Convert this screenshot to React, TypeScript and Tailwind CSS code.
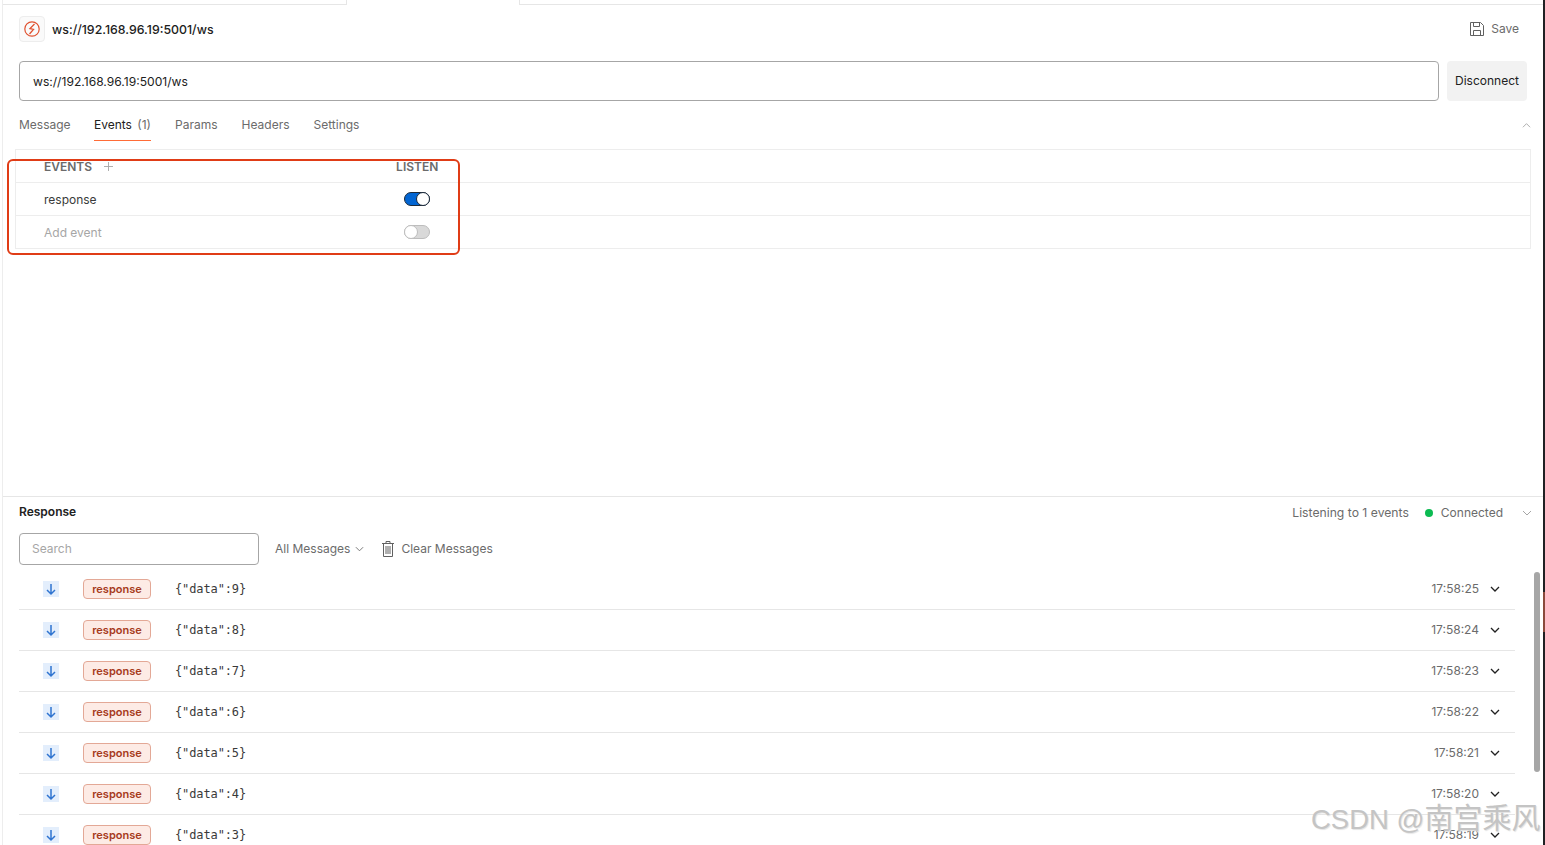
const font = { fontFamily: "Inter, 'Liberation Sans', sans-serif" }

const messages = [
  { data: 9, time: "17:58:25" },
  { data: 8, time: "17:58:24" },
  { data: 7, time: "17:58:23" },
  { data: 6, time: "17:58:22" },
  { data: 5, time: "17:58:21" },
  { data: 4, time: "17:58:20" },
  { data: 3, time: "17:58:19" },
]

function Chevron({ className, up, width = 1 }: { className: string; up?: boolean; width?: number }) {
  return (
    <svg viewBox="0 0 10 6" className={className} fill="none" stroke="currentColor" strokeWidth={width}>
      <path d={up ? "M1 5.5L5 1.5L9 5.5" : "M1 1L5 5L9 1"} />
    </svg>
  )
}

function Toggle({ on }: { on?: boolean }) {
  return (
    <div
      className={
        on
          ? "flex h-[14px] w-[26px] items-center justify-end rounded-full bg-[#0265d2] border border-[#1c2a3a]"
          : "flex h-[14px] w-[26px] items-center justify-start rounded-full bg-[#d9d9d9] border border-[#bdbdbd]"
      }
    >
      <div
        className={
          on
            ? "-mr-px h-[14px] w-[14px] shrink-0 rounded-full bg-white border border-[#1c2a3a]"
            : "-ml-px h-[14px] w-[14px] shrink-0 rounded-full bg-white border border-[#bdbdbd]"
        }
      />
    </div>
  )
}

function MessageRow({ data, time }: { data: number; time: string }) {
  return (
    <div className="flex h-[41px] shrink-0 items-center border-b border-[#e6e6e6] pl-[24px] pr-[15px]">
      <div className="flex h-4 w-4 items-center justify-center bg-[#e3eefc] text-[#2f74d0]">
        <svg viewBox="0 0 16 16" className="h-4 w-4" fill="none" stroke="currentColor" strokeWidth="1.5">
          <path d="M8 3V13M4 9L8 13L12 9" />
        </svg>
      </div>
      <div className="ml-[24px] flex h-5 w-[68px] items-center justify-center rounded-[4px] border border-[#e3a896] bg-[#fdebe5] text-[11px] font-semibold text-[#a63a1c]">
        response
      </div>
      <div className="ml-[24px] text-[12px] text-[#3a3a3a]" style={{ fontFamily: "'DejaVu Sans Mono', monospace", letterSpacing: "-0.12px" }}>
        {`{"data":${data}}`}
      </div>
      <div className="ml-auto text-[12px] text-[#6b6b6b]">{time}</div>
      <Chevron width={1.3} className="ml-[11px] h-[6px] w-[10px] text-[#212121]" />
    </div>
  )
}

export default function App() {
  return (
    <div className="relative flex h-[845px] w-full overflow-hidden bg-white" style={font}>
      <div className="w-[3px] shrink-0 border-r border-[#ededed]" />
      <div className="flex min-w-0 flex-1 flex-col">
        {/* top tab strip */}
        <div className="flex h-[5px] shrink-0">
          <div className="w-[344px] border-b border-r border-[#e6e6e6]" />
          <div className="w-[172px]" />
          <div className="flex-1 border-b border-l border-[#e6e6e6]" />
        </div>

        {/* request pane */}
        <div className="flex h-[492px] shrink-0 flex-col border-b border-[#e6e6e6]">
          <div className="flex h-[26px] mt-[11px] shrink-0 items-center pl-4 pr-6">
            <div className="flex h-[26px] w-[26px] items-center justify-center rounded-[4px] border border-[#ededed] bg-[#fafafa] text-[#e0512f]">
              <svg viewBox="0 0 16 16" className="h-4 w-4" fill="none" stroke="currentColor" strokeWidth="1.2">
                <circle cx="8" cy="8" r="7.2" />
                <path d="M10.5 3L6 7.6L9.5 8.4L5.5 13" strokeWidth="1.3" />
              </svg>
            </div>
            <div className="ml-[7px] mt-[2px] text-[12.35px] font-medium text-[#212121]">ws://192.168.96.19:5001/ws</div>
            <div className="ml-auto flex items-center text-[12px] text-[#6b6b6b]">
              <svg viewBox="0 0 16 16" className="h-4 w-4 text-[#616161]" fill="none" stroke="currentColor" strokeWidth="1">
                <path d="M1.5 1.5H11.5L14.5 4.5V14.5H1.5Z" />
                <path d="M4.5 1.5V5.5H10.5V1.5M4.5 14.5V9.5H11.5V14.5" />
              </svg>
              <span className="ml-[6px]">Save</span>
            </div>
          </div>

          <div className="mt-[19px] flex shrink-0 pl-4 pr-4">
            <div className="flex h-10 flex-1 items-center rounded-[4px] border border-[#a6a6a6] pl-[13px] pt-[2px] text-[12.1px] text-[#212121]">
              ws://192.168.96.19:5001/ws
            </div>
            <div className="ml-2 flex h-10 w-[80px] items-center justify-center rounded-[4px] bg-[#f2f2f2] text-[12px] text-[#212121]">
              Disconnect
            </div>
          </div>

          <div className="relative mt-[10px] flex h-[30px] shrink-0 gap-6 pl-4 text-[12px] text-[#6b6b6b]">
            <div className="w-[51px] pt-[5px]">Message</div>
            <div className="h-[30px] w-[57px] whitespace-nowrap border-b border-[#ff6c37] pt-[5px] text-[#212121]">
              Events <span className="ml-[2px] text-[#6b6b6b]">(1)</span>
            </div>
            <div className="pt-[5px]">Params</div>
            <div className="pt-[5px]">Headers</div>
            <div className="pt-[5px]">Settings</div>
            <Chevron up className="absolute right-[12px] top-[11px] h-[6px] w-[9px] text-[#a6a6a6]" />
          </div>

          <div className="ml-3 mr-3 mt-[8px] shrink-0 border border-[#ededed] text-[12px]">
            <div className="flex h-[33px] items-center border-b border-[#ededed] pl-[28px]">
              <span className="mt-[2px] font-semibold text-[12px] text-[#6b6b6b]">EVENTS</span>
              <svg viewBox="0 0 10 10" className="ml-[12px] h-[9px] w-[9px] text-[#a6a6a6]" fill="none" stroke="currentColor" strokeWidth="1">
                <path d="M5 0V10M0 5H10" />
              </svg>
              <span className="ml-[283px] mt-[2px] font-semibold text-[12px] text-[#6b6b6b]">LISTEN</span>
            </div>
            <div className="flex h-[33px] items-center border-b border-[#ededed] pl-[28px] text-[#3a3a3a]">
              <span className="mt-[2px] w-[360px]">response</span>
              <Toggle on />
            </div>
            <div className="flex h-[32px] items-center pl-[28px] text-[#a6a6a6]">
              <span className="mt-[2px] w-[360px]">Add event</span>
              <Toggle />
            </div>
          </div>
        </div>

        {/* response pane */}
        <div className="flex min-h-0 flex-1 flex-col">
          <div className="mt-[8px] flex h-[16px] shrink-0 items-center pl-4 pr-[11px]">
            <span className="-mt-[2px] text-[12px] font-semibold text-[#212121]">Response</span>
            <span className="ml-auto text-[12.2px] text-[#6b6b6b]">Listening to 1 events</span>
            <span className="ml-[16px] h-2 w-2 rounded-full bg-[#0cbb52]" />
            <span className="ml-2 text-[12px] text-[#6b6b6b]">Connected</span>
            <Chevron className="ml-[19px] h-[6px] w-[10px] text-[#a6a6a6]" />
          </div>
          <div className="mt-[12px] flex h-8 shrink-0 items-center pl-4 text-[12px] text-[#6b6b6b]">
            <div className="flex h-8 w-[240px] items-center rounded-[4px] border border-[#a6a6a6] pl-3 text-[#a6a6a6]">Search</div>
            <span className="ml-4">All Messages</span>
            <Chevron className="ml-[5px] h-[6px] w-[9px] text-[#6b6b6b]" />
            <svg viewBox="0 0 12 16" className="ml-[18px] h-4 w-3 text-[#616161]" fill="none" stroke="currentColor" strokeWidth="1">
              <path d="M0 2.5H12M4 2.5V0.5H8V2.5M1.5 2.5V15.5H10.5V2.5M4 5V13M6 5V13M8 5V13" />
            </svg>
            <span className="ml-[7px]">Clear Messages</span>
          </div>
          <div className="mt-[4px] mr-[28px] flex min-h-0 flex-1 flex-col overflow-hidden pl-4">
            {messages.map((m) => (
              <MessageRow key={m.data} data={m.data} time={m.time} />
            ))}
          </div>
        </div>
      </div>
      <div className="w-[2px] shrink-0 bg-[#202124]" />

      {/* overlays: scrollbar, annotation, watermark */}
      <div className="absolute left-[1534px] top-[572px] h-[200px] w-[6px] rounded-full bg-[#a6a6a6]" />
      <div className="absolute left-[1543px] top-[592px] h-[40px] w-[2px] bg-[#8a4a3c]" />
      <div className="absolute left-[7px] top-[159px] h-[96px] w-[453px] rounded-[6px] border-2 border-[#e03c16]" />
      <div
        className="absolute left-[1311px] top-[797px] text-[27.5px] leading-[44px] whitespace-nowrap text-[#c4c4c4] [text-shadow:1px_1px_1px_#e4e4e4]"
        style={{ fontFamily: "'Liberation Sans', 'Noto Sans CJK SC', sans-serif" }}
      >
        CSDN @<span className="text-[29px]">南宫乘风</span>
      </div>
    </div>
  )
}
